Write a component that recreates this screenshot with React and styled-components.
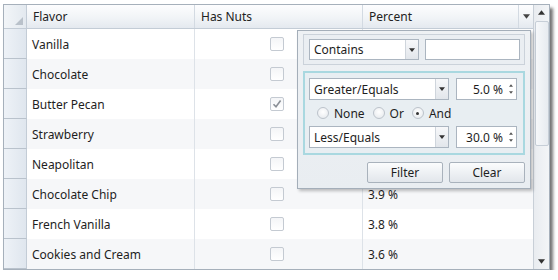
import React from "react";
import styled, { createGlobalStyle } from "styled-components";

const GlobalStyle = createGlobalStyle`
  body {
    margin: 0;
    background: #ffffff;
    font-family: "Noto Sans", "Open Sans", sans-serif;
    font-size: 12px;
    color: #1e1e1e;
  }
`;

const rows = [
  { name: "Vanilla", nuts: false, pct: "" },
  { name: "Chocolate", nuts: false, pct: "" },
  { name: "Butter Pecan", nuts: true, pct: "" },
  { name: "Strawberry", nuts: false, pct: "" },
  { name: "Neapolitan", nuts: false, pct: "" },
  { name: "Chocolate Chip", nuts: false, pct: "3.9 %" },
  { name: "French Vanilla", nuts: false, pct: "3.8 %" },
  { name: "Cookies and Cream", nuts: false, pct: "3.6 %" },
];

const Frame = styled.div`
  position: relative;
  margin: 4px 0 0 3px;
  width: 547px;
  height: 266px;
  box-sizing: border-box;
  border: 1px solid #a6b0bb;
  box-shadow: 3px 4px 3px rgba(0, 0, 0, 0.55);
  display: flex;
  background: #fff;
`;

const Grid = styled.div`
  width: 529px;
  display: flex;
  flex-direction: column;
`;

const HeaderRow = styled.div`
  display: grid;
  grid-template-columns: 23px 168px 168px 170px;
  height: 24px;
  box-sizing: border-box;
  border-bottom: 1px solid #c3ccd6;
  background: linear-gradient(#fdfdfe, #f1f4f7 55%, #e4e9ef);
`;

const HeaderCell = styled.div`
  display: flex;
  align-items: center;
  padding-left: 6px;
  border-right: 1px solid #d3dae2;
  position: relative;
  color: #222;
  &:last-child {
    border-right: none;
  }
`;

const Corner = styled.div`
  border-right: 1px solid #c3ccd6;
  background: linear-gradient(90deg, #f2f5f8, #e3e9ef);
  display: flex;
  align-items: flex-end;
  justify-content: flex-end;
  padding: 0 3px 3px 0;
`;

const FilterButton = styled.div`
  margin-left: auto;
  width: 14px;
  height: 100%;
  border-left: 1px solid #d3dae2;
  display: flex;
  align-items: center;
  justify-content: center;
`;

const Row = styled.div`
  display: grid;
  grid-template-columns: 23px 168px 168px 170px;
  height: 30px;
  background: ${(p) => (p.$alt ? "#f6f7f9" : "#ffffff")};
`;

const RowHeader = styled.div`
  background: linear-gradient(90deg, #eef2f7, #dfe6ee);
  border-right: 1px solid #c3ccd6;
  border-bottom: 1px solid #b9c2cc;
  box-sizing: border-box;
`;

const Cell = styled.div`
  display: flex;
  align-items: center;
  padding-left: 5px;
  border-right: 1px solid #dde2e8;
  justify-content: ${(p) => (p.$center ? "flex-end" : "flex-start")};
  padding-right: ${(p) => (p.$center ? "78px" : "0")};
  &:last-child {
    border-right: none;
  }
`;

const CheckBox = styled.div`
  width: 12px;
  height: 12px;
  border: 1px solid #c4cad2;
  border-radius: 2px;
  background: linear-gradient(#f4f5f7, #ffffff);
  display: flex;
  align-items: center;
  justify-content: center;
`;

const ScrollBar = styled.div`
  flex: 1;
  border-left: 1px solid #c8cfd7;
  background: linear-gradient(90deg, #e9ecf0, #f3f5f7);
  display: flex;
  flex-direction: column;
  align-items: center;
`;

const ScrollArrow = styled.div`
  height: 15px;
  display: flex;
  align-items: center;
  justify-content: center;
  width: 100%;
`;

const Thumb = styled.div`
  width: 14px;
  height: 125px;
  margin-top: 1px;
  box-sizing: border-box;
  border: 1px solid #c6ced7;
  border-radius: 2px;
  background: linear-gradient(90deg, #f6f8fa, #e7ebf0);
`;

const Spacer = styled.div`
  flex: 1;
`;

const Popup = styled.div`
  position: absolute;
  left: 293px;
  top: 25px;
  width: 234px;
  height: 159px;
  box-sizing: border-box;
  border: 1px solid #a4aeb9;
  background: linear-gradient(#eef1f4, #e9edf1);
  box-shadow: 2px 2px 3px rgba(0, 0, 0, 0.25);
  padding: 3px 5px 5px 5px;
  display: flex;
  flex-direction: column;
`;

const PlainGroup = styled.div`
  height: 32px;
  box-sizing: border-box;
  border: 1px solid #cbd2da;
  background: #eaeef2;
  padding: 4px 4px 4px 5px;
  display: flex;
  gap: 6px;
`;

const TealGroup = styled.div`
  margin-top: 6px;
  box-sizing: border-box;
  border: 2px solid #a9d8e0;
  background: #e8eef2;
  padding: 5px 6px 5px 4px;
  display: flex;
  flex-direction: column;
  gap: 3px;
`;

const FieldRow = styled.div`
  display: flex;
  gap: 7px;
  height: 22px;
`;

const Combo = styled.div`
  width: ${(p) => p.$w}px;
  box-sizing: border-box;
  border: 1px solid #abb5c0;
  background: #fff;
  display: flex;
  align-items: center;
  padding-left: 4px;
`;

const ComboLabel = styled.span`
  flex: 1;
`;

const DropButton = styled.div`
  width: 12px;
  height: 100%;
  border-left: 1px solid #cfd5dc;
  background: linear-gradient(#f7f8fa, #e2e6eb);
  display: flex;
  align-items: center;
  justify-content: center;
`;

const TextBox = styled.div`
  flex: 1;
  box-sizing: border-box;
  border: 1px solid #abb5c0;
  background: #fff;
`;

const Numeric = styled.div`
  width: 61px;
  box-sizing: border-box;
  border: 1px solid #abb5c0;
  background: #fff;
  display: flex;
  align-items: center;
  justify-content: flex-end;
`;

const Spinner = styled.div`
  width: 10px;
  height: 100%;
  display: flex;
  flex-direction: column;
  align-items: center;
  justify-content: center;
  gap: 4px;
  margin-left: 3px;
`;

const RadioRow = styled.div`
  display: flex;
  align-items: center;
  height: 20px;
  padding-left: 8px;
  gap: 8px;
`;

const RadioItem = styled.label`
  display: flex;
  align-items: center;
  gap: 5px;
`;

const Radio = styled.span`
  width: 12px;
  height: 12px;
  box-sizing: border-box;
  border-radius: 50%;
  border: 1px solid #bcc3cb;
  background: radial-gradient(circle at 50% 40%, #ffffff, #e3e7eb);
  display: flex;
  align-items: center;
  justify-content: center;
  &::after {
    content: "";
    width: 3px;
    height: 3px;
    border-radius: 50%;
    background: ${(p) => (p.$on ? "#333" : "transparent")};
  }
`;

const Buttons = styled.div`
  margin-top: 7px;
  display: flex;
  justify-content: flex-end;
  gap: 6px;
`;

const Button = styled.div`
  width: 76px;
  height: 21px;
  box-sizing: border-box;
  border: 1px solid #a9b2bc;
  border-radius: 2px;
  background: linear-gradient(#fbfcfd, #eef1f4 50%, #e2e6eb);
  display: flex;
  align-items: center;
  justify-content: center;
`;

const Tri = ({ up, size = 7, color = "#333" }) => (
  <svg width={size} height={Math.ceil(size / 2) + 1} viewBox="0 0 8 5">
    <path d={up ? "M0 5 L4 0 L8 5 Z" : "M0 0 L8 0 L4 5 Z"} fill={color} />
  </svg>
);

const Check = () => (
  <svg width="10" height="10" viewBox="0 0 10 10">
    <path d="M1.5 5.2 L4 7.8 L8.6 1.6" fill="none" stroke="#8a8f96" strokeWidth="1.6" />
  </svg>
);

const Dropdown = ({ label, w }) => (
  <Combo $w={w}>
    <ComboLabel>{label}</ComboLabel>
    <DropButton>
      <Tri size={6} />
    </DropButton>
  </Combo>
);

const Number = ({ value }) => (
  <Numeric>
    {value}
    <Spinner>
      <Tri up size={4} color="#555" />
      <Tri size={4} color="#555" />
    </Spinner>
  </Numeric>
);

export default function App() {
  return (
    <>
      <GlobalStyle />
      <Frame>
        <Grid>
          <HeaderRow>
            <Corner>
              <svg width="8" height="8" viewBox="0 0 8 8">
                <path d="M8 0 L8 8 L0 8 Z" fill="#b9c1ca" />
              </svg>
            </Corner>
            <HeaderCell>Flavor</HeaderCell>
            <HeaderCell>Has Nuts</HeaderCell>
            <HeaderCell>
              Percent
              <FilterButton>
                <Tri size={7} color="#444" />
              </FilterButton>
            </HeaderCell>
          </HeaderRow>
          {rows.map((r, i) => (
            <Row key={r.name} $alt={i % 2 === 1}>
              <RowHeader />
              <Cell>{r.name}</Cell>
              <Cell $center>
                <CheckBox>{r.nuts && <Check />}</CheckBox>
              </Cell>
              <Cell>{r.pct}</Cell>
            </Row>
          ))}
        </Grid>
        <ScrollBar>
          <ScrollArrow>
            <Tri up size={7} color="#333" />
          </ScrollArrow>
          <Thumb />
          <Spacer />
          <ScrollArrow>
            <Tri size={7} color="#333" />
          </ScrollArrow>
        </ScrollBar>

        <Popup>
          <PlainGroup>
            <Dropdown label="Contains" w={110} />
            <TextBox />
          </PlainGroup>
          <TealGroup>
            <FieldRow>
              <Dropdown label="Greater/Equals" w={141} />
              <Number value="5.0 %" />
            </FieldRow>
            <RadioRow>
              <RadioItem>
                <Radio />
                None
              </RadioItem>
              <RadioItem>
                <Radio />
                Or
              </RadioItem>
              <RadioItem>
                <Radio $on />
                And
              </RadioItem>
            </RadioRow>
            <FieldRow>
              <Dropdown label="Less/Equals" w={141} />
              <Number value="30.0 %" />
            </FieldRow>
          </TealGroup>
          <Buttons>
            <Button>Filter</Button>
            <Button>Clear</Button>
          </Buttons>
        </Popup>
      </Frame>
    </>
  );
}
